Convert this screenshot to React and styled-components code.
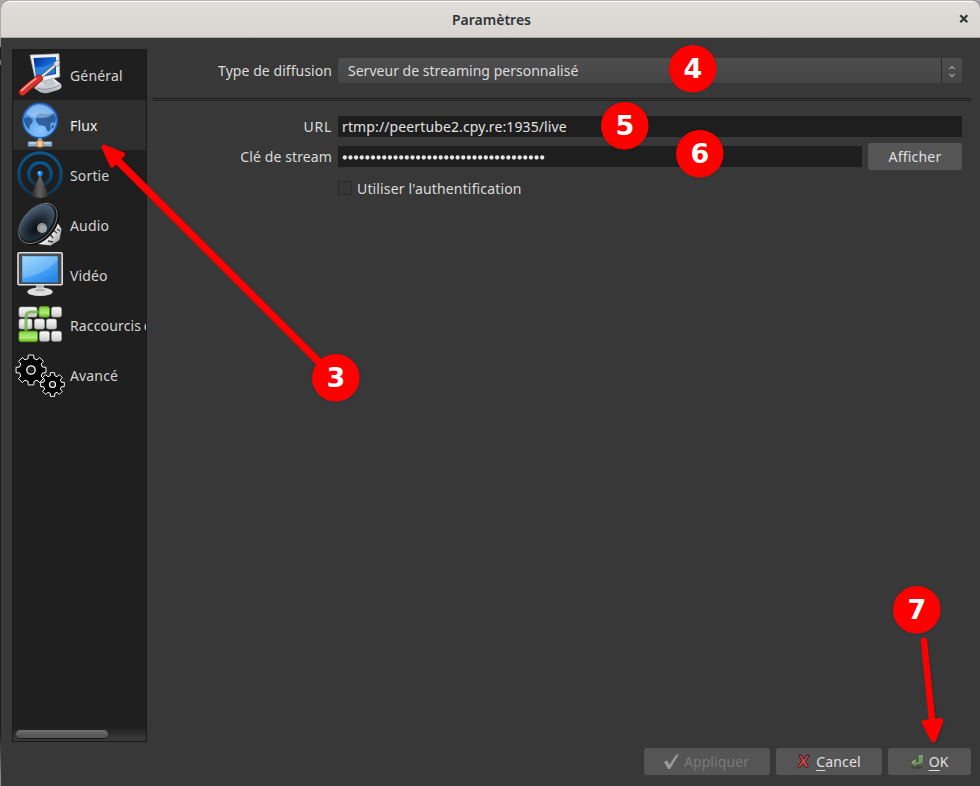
import React from "react";
import styled, { createGlobalStyle } from "styled-components";

const GlobalStyle = createGlobalStyle`
  *, *::before, *::after { box-sizing: border-box; }
  body { margin: 0; background: #1c1c1c; overflow: hidden; }
  button, input { font: inherit; letter-spacing: inherit; color: inherit; border: 0; margin: 0; }
`;

const Desktop = styled.div`
  position: relative;
  width: 980px;
  height: 786px;
  padding: 0 0 0 1px;
  overflow: hidden;
  background: linear-gradient(#aaa 0 38px, #8a8a8a 38px 47px, #1b1b1b 47px 60px, #777 60px 65px, #1b1b1b 65px 732px, #8a8a8a 777px);
  font-family: "Noto Sans", "Open Sans", sans-serif;
  font-size: 14px;
  color: #dcdcdc;
`;

const Window = styled.div`
  height: 786px;
  display: flex;
  flex-direction: column;
  background: #383838;
  border-radius: 8px 8px 0 0;
`;

const TitleBar = styled.header`
  flex: none;
  height: 38px;
  display: grid;
  grid-template-columns: 32px 1fr 32px;
  align-items: center;
  border-top: 1px solid #b5b2b0;
  border-bottom: 1px solid #aaa69d;
  border-radius: 8px 8px 0 0;
  background: linear-gradient(#fff 0 1px, #e0dddb 1px, #d9d5cf);
  color: #2e3436;
`;

const Title = styled.h1`
  grid-column: 2;
  margin: 0;
  padding: 2px 0 0 2px;
  text-align: center;
  font-size: 14px;
  font-weight: 600;
  line-height: 20px;
`;

const CloseButton = styled.button`
  display: grid;
  place-items: center;
  padding: 0;
  background: none;
`;

const Main = styled.div`
  flex: none;
  height: 704px;
  display: flex;
  padding: 11px 9px 0 11px;
`;

const Sidebar = styled.nav`
  width: 135px;
  height: 693px;
  flex: none;
  display: flex;
  flex-direction: column;
  border: 1px solid #1a1a1a;
  background: #1f1f1f;
  overflow: hidden;
`;

const NavItem = styled.a`
  flex: none;
  height: 50px;
  display: flex;
  align-items: center;
  gap: 5px;
  padding-left: 2px;
  background: ${(p) => (p.$active ? "#2e2e2e" : "transparent")};
  color: ${(p) => (p.$active ? "#f2f2f2" : "#d4d4d4")};
  white-space: nowrap;
  letter-spacing: 0.15px;
  word-spacing: -1.3px;
  svg { flex: none; width: 50px; height: 50px; }
`;

const ScrollTrack = styled.div`
  margin-top: auto;
  height: 14px;
  padding: 3px 3px 0;
  background: linear-gradient(#1f1f1f, #373737 80%);
`;

const ScrollThumb = styled.div`
  width: 92px;
  height: 9px;
  border-radius: 5px;
  border-bottom: 1px solid #191919;
  background: linear-gradient(#707070, #5a5a5a 60%, #555);
`;

const Panel = styled.main`
  flex: 1;
  padding: 9px 0 0 6px;
`;

const FormRow = styled.div`
  display: grid;
  grid-template-columns: 179px 624px;
  column-gap: 6px;
  align-items: center;
  height: ${(p) => p.$h}px;
`;

const Label = styled.label`
  text-align: right;
  white-space: nowrap;
  letter-spacing: ${(p) => p.$track || "0"};
`;

const Select = styled.div`
  height: 25px;
  display: flex;
  border-radius: 3px;
  background: linear-gradient(#4e4e4e, #454545);
`;

const SelectValue = styled.span`
  flex: 1;
  padding: 0 10px;
  line-height: 25px;
  letter-spacing: 0.02px;
`;

const SelectArrows = styled.span`
  width: 21px;
  display: grid;
  place-items: center;
  border-left: 1px solid #2b2b2b;
`;

const Divider = styled.div`
  width: 818px;
  height: 3px;
  margin: 15px 0;
  border: 1px solid #1d1d1d;
`;

const TextField = styled.div`
  flex: 1;
  height: 21px;
  padding: 0 4px;
  background: #1e1e1e;
  color: #e2e2e2;
  line-height: 21px;
  letter-spacing: ${(p) => p.$track || "0"};
`;

const Dots = styled.svg`
  display: block;
  width: 210px;
  height: 21px;
  fill: #e4e4e4;
`;

const Group = styled.div`
  display: flex;
  align-items: center;
  gap: ${(p) => p.$gap}px;
`;

const Button = styled.button`
  width: ${(p) => p.$w}px;
  height: 27px;
  flex: none;
  display: flex;
  align-items: center;
  justify-content: center;
  gap: ${(p) => p.$gap || 6}px;
  padding: 0 ${(p) => p.$shift || 0}px 0 0;
  border-radius: 3px;
  background: #555;
  color: ${(p) => (p.$off ? "#7a7a7a" : "#e0e0e0")};
  letter-spacing: ${(p) => p.$track || "0"};
  line-height: 20px;
`;

const Mnemonic = styled.span`
  text-decoration: underline;
  text-underline-offset: 3px;
  text-decoration-thickness: 1px;
`;

const CheckBox = styled.span`
  width: 14px;
  height: 14px;
  border: 1px solid #2a2a2a;
  background: #373737;
`;

const Footer = styled.footer`
  display: flex;
  justify-content: flex-end;
  gap: 6px;
  padding: 6px 9px 0 0;
`;

const Annotations = styled.svg`
  position: absolute;
  inset: 0;
  width: 980px;
  height: 786px;
  pointer-events: none;
  filter: drop-shadow(1px 1px 1px rgba(0, 0, 0, 0.2));
`;

const Badge = styled.span`
  position: absolute;
  left: ${(p) => p.$x}px;
  top: ${(p) => p.$y}px;
  width: 48px;
  height: 48px;
  border-radius: 50%;
  background: radial-gradient(circle at 23.5px 23.5px, #f00 23.6px, transparent 24.4px);
  color: #fff;
  text-align: center;
  font: bold 27px/48px "DejaVu Sans", sans-serif;
  box-shadow: 0 0 2px rgba(0, 0, 0, 0.25);
`;

function gearPath(cx, cy, outer, inner) {
  const pts = [];
  for (let i = 0; i < 8; i += 1) {
    const a = (i * Math.PI) / 4 - Math.PI / 2;
    [[-0.25, inner], [-0.18, outer], [0.18, outer], [0.25, inner]].forEach(([d, r]) => {
      pts.push(`${(cx + r * Math.cos(a + d)).toFixed(2)} ${(cy + r * Math.sin(a + d)).toFixed(2)}`);
    });
  }
  return `M${pts.join("L")}Z`;
}

const GeneralIcon = () => (
  <svg viewBox="0 0 50 50">
    <defs>
      <linearGradient id="gs" x2="1" y2="1"><stop stopColor="#002b94" /><stop offset=".5" stopColor="#1466d2" /><stop offset="1" stopColor="#0a3aa0" /></linearGradient>
      <linearGradient id="gb" x2="0" y2="1"><stop stopColor="#fff" /><stop offset="1" stopColor="#a9abb4" /></linearGradient>
    </defs>
    <path d="M26 31l12-3 8 6q2 4-3 6l-10 3q-5 1-8-1l-6-4z" fill="url(#gb)" />
    <path d="M26 31l11-3 4 6-10 3z" fill="#c3c6cc" />
    <path d="M22 38q9 4 23-3" stroke="#8f939c" fill="none" />
    <path d="M15 5l29-1.2.8 23L21 33z" fill="#eef0f2" stroke="#a5a8ab" strokeWidth=".7" />
    <path d="M18.5 8l22.5-1v17l-20 4z" fill="url(#gs)" />
    <path d="M20 17q12 1 20-6v12l-19 4z" fill="#3f9bea" opacity=".55" />
    <path d="M25 28L40 15.500" stroke="#666" strokeWidth="3" />
    <path d="M25 28L40 15.500" stroke="#e9e9e9" strokeWidth="1.700" />
    <path d="M38.500 15.500l1-3.500 4-2 1.200 2.500-2 4z" fill="#dfe3e6" stroke="#777" strokeWidth=".7" />
    <path d="M7.500 42L15 35.500l9-7" stroke="#8f1111" strokeWidth="7.600" strokeLinecap="round" />
    <path d="M7.500 42L15 35.500l9-7" stroke="#d8302b" strokeWidth="6.200" strokeLinecap="round" />
    <path d="M6.500 40.500L14 34l7-5.500" stroke="#f79a91" strokeWidth="1.800" strokeLinecap="round" />
  </svg>
);

const GlobeIcon = () => (
  <svg viewBox="0 0 50 50">
    <defs>
      <radialGradient id="gl" cx=".5" cy=".8" r=".9"><stop stopColor="#8cc6ff" /><stop offset=".6" stopColor="#4f9bea" /><stop offset="1" stopColor="#2b72cc" /></radialGradient>
    </defs>
    <path d="M23 37h4v6h-4z" fill="#9ab6d4" />
    <path d="M13 41.500h24v5H13z" fill="#8fabc9" stroke="#4b6b90" strokeWidth=".8" />
    <path d="M14 43h22" stroke="#d8e6f3" />
    <rect x="22" y="40.500" width="6" height="6.500" rx="1" fill="#efc79a" stroke="#bd7837" />
    <circle cx="25" cy="20.500" r="17.300" fill="url(#gl)" stroke="#1d60b5" strokeWidth="1.400" />
    <path d="M9 18l5-1 4 3-1 3-2 2-1 5-3-4-2-5zM21 16l4-3 6 1 7-1 3 5-1 5-3-1-2 3 1 4-3 3-3-6-6-1-3-4z" fill="#24528f" opacity=".85" />
    <path d="M36 26l3-1-1 4z" fill="#24528f" />
    <path d="M11 13Q17 4 25 4.500T39 13q-4 5-14 5t-14-5z" fill="#d5eaff" opacity=".45" />
  </svg>
);

const OutputIcon = () => (
  <svg viewBox="0 0 50 50">
    <defs>
      <linearGradient id="or" x2="0" y2="1"><stop stopColor="#075792" /><stop offset=".6" stopColor="#084a79" /><stop offset="1" stopColor="#14324a" /></linearGradient>
      <linearGradient id="oc" x2="1" y2="0"><stop stopColor="#2a2a2a" /><stop offset=".5" stopColor="#606060" /><stop offset="1" stopColor="#2d2d2d" /></linearGradient>
    </defs>
    <circle cx="25" cy="24" r="21.200" fill="none" stroke="url(#or)" strokeWidth="3" />
    <circle cx="25" cy="24" r="11.300" fill="none" stroke="url(#or)" strokeWidth="3.200" />
    <path d="M24 26h2l7.500 20q-8 4-17 0z" fill="url(#oc)" />
    <circle cx="25" cy="23.500" r="2.700" fill="#168aff" />
    <circle cx="24.400" cy="22.700" r="1" fill="#a8dcff" />
  </svg>
);

const AudioIcon = () => (
  <svg viewBox="0 0 50 50">
    <defs>
      <radialGradient id="ac" cx=".62" cy=".62" r=".65"><stop stopColor="#0b0f13" /><stop offset=".45" stopColor="#202c37" /><stop offset="1" stopColor="#4d6377" /></radialGradient>
      <linearGradient id="ab" x2="1" y2="1"><stop stopColor="#777" /><stop offset=".6" stopColor="#f2f2f2" /><stop offset="1" stopColor="#888" /></linearGradient>
    </defs>
    <path d="M41 13l1 9 4.500 7-2 11-9 5.500-16-2z" fill="url(#ab)" />
    <path d="M38 30l4 3m-7 1l3 4m4-9l3 2m-12 10l5 1" stroke="#3b3b3b" strokeWidth="1.400" />
    <ellipse cx="24.500" cy="24.500" rx="15.500" ry="24" transform="rotate(42 24.500 24.500)" fill="#0b0b0b" />
    <ellipse cx="23" cy="23.500" rx="14.800" ry="23.500" transform="rotate(42 23 23.500)" fill="#161a1d" stroke="#8d8d8d" strokeWidth=".8" />
    <ellipse cx="22" cy="22.500" rx="13.300" ry="21.500" transform="rotate(42 22 22.500)" fill="url(#ac)" />
    <circle cx="27" cy="28" r="5" fill="#8f9295" />
    <circle cx="28" cy="29" r="3.500" fill="#a6a6a6" />
  </svg>
);

const VideoIcon = () => (
  <svg viewBox="0 0 50 50">
    <defs>
      <linearGradient id="vs" x2=".7" y2="1"><stop stopColor="#94d2ff" /><stop offset=".5" stopColor="#55adf8" /><stop offset="1" stopColor="#2688e9" /></linearGradient>
    </defs>
    <path d="M21 35h8v5h-8z" fill="#aaa" />
    <ellipse cx="25" cy="41.700" rx="12.700" ry="4.300" fill="#dedede" />
    <ellipse cx="25" cy="40" rx="5" ry="1.600" fill="#b4b4b4" />
    <rect x="3" y="2.700" width="44.200" height="32" rx="1" fill="#4a4a4a" stroke="#dedede" strokeWidth="1.600" />
    <rect x="7" y="6" width="36" height="26.500" fill="url(#vs)" stroke="#24659e" strokeWidth=".6" />
    <path d="M7.300 6.300h35v4Q29 25 7.300 28z" fill="#d8f0ff" opacity=".25" />
  </svg>
);

const WHITE_KEYS = [[4, 7, 18], [36.5, 7, 10], [4, 19, 13], [19.5, 19, 10], [31.5, 19, 10], [24.5, 31.3, 10], [36.5, 31.3, 10]];
const GREEN_KEYS = [[24, 6.7, 10.5], [4, 31.3, 18.5]];

const KeysIcon = () => (
  <svg viewBox="0 0 50 50">
    <defs>
      <linearGradient id="kw" x2="0" y2="1"><stop stopColor="#f8f8f8" /><stop offset=".6" stopColor="#e0e0e0" /><stop offset="1" stopColor="#c5c5c5" /></linearGradient>
      <linearGradient id="kg" x2="0" y2="1"><stop stopColor="#83d33f" /><stop offset=".6" stopColor="#b3ed7a" /><stop offset="1" stopColor="#68b929" /></linearGradient>
    </defs>
    {WHITE_KEYS.map(([x, y, w]) => (
      <rect key={`${x}-${y}`} x={x} y={y} width={w} height="10" rx="2" fill="url(#kw)" stroke="#aaa" strokeWidth=".6" />
    ))}
    <path d="M11 31V17q0-5 5-5h8" fill="none" stroke="#72b546" strokeWidth="3.2" opacity=".85" />
    {GREEN_KEYS.map(([x, y, w]) => (
      <rect key={x} x={x} y={y} width={w} height="10.3" rx="2" fill="url(#kg)" stroke="#59a81e" strokeWidth="1" />
    ))}
  </svg>
);

const GearsIcon = () => (
  <svg viewBox="0 0 50 50" fill="#000" stroke="#fff" strokeLinejoin="round">
    <path d={gearPath(16, 20, 15.2, 11.8)} />
    <circle cx="16" cy="20" r="4.2" fill="#1f1f1f" strokeWidth="1.3" />
    <path d={gearPath(37.5, 34.5, 12, 9.1)} />
    <circle cx="37.5" cy="34.5" r="3" fill="#1f1f1f" strokeWidth="1.2" />
  </svg>
);

const NAV = [
  { label: "Général", Icon: GeneralIcon },
  { label: "Flux", Icon: GlobeIcon, active: true },
  { label: "Sortie", Icon: OutputIcon },
  { label: "Audio", Icon: AudioIcon },
  { label: "Vidéo", Icon: VideoIcon },
  { label: "Raccourcis\u00a0clavier", Icon: KeysIcon },
  { label: "Avancé", Icon: GearsIcon },
];

const BADGES = [
  [3, 312, 354],
  [4, 669, 45],
  [5, 601, 102],
  [6, 676, 130],
  [7, 893, 586],
];

export default function App() {
  return (
    <Desktop>
      <GlobalStyle />
      <Window>
        <TitleBar>
          <Title>Paramètres</Title>
          <CloseButton aria-label="Fermer">
            <svg width="10" height="10" viewBox="0 0 10 10" stroke="#2e3436" strokeWidth="2.2">
              <path d="M1.3 1.3l7 7m0-7l-7 7" />
            </svg>
          </CloseButton>
        </TitleBar>
        <Main>
          <Sidebar>
            {NAV.map(({ label, Icon, active }) => (
              <NavItem key={label} $active={active}>
                <Icon />
                <span>{label}</span>
              </NavItem>
            ))}
            <ScrollTrack>
              <ScrollThumb />
            </ScrollTrack>
          </Sidebar>
          <Panel>
            <FormRow $h={25}>
              <Label $track="0.06px">Type de diffusion</Label>
              <Select>
                <SelectValue>Serveur de streaming personnalisé</SelectValue>
                <SelectArrows>
                  <svg width="8" height="14" viewBox="0 0 8 14" fill="none" stroke="#a5a5a5" strokeWidth="1.2">
                    <path d="M1.500 5l2.500-2.500L6.500 5M1.500 10L4 12.500 6.500 10" />
                  </svg>
                </SelectArrows>
              </Select>
            </FormRow>
            <Divider />
            <FormRow $h={21}>
              <Label $track="0.7px">URL</Label>
              <TextField $track="0.12px">rtmp://peertube2.cpy.re:1935/live</TextField>
            </FormRow>
            <FormRow $h={39}>
              <Label $track="0.12px">Clé de stream</Label>
              <Group $gap={6}>
                <TextField>
                  <Dots aria-label="Clé masquée">
                    {Array.from({ length: 36 }, (_, i) => (
                      <circle key={i} cx={2.8 + i * 5.64} cy="11.5" r="2.15" />
                    ))}
                  </Dots>
                </TextField>
                <Button $w={94} $track="0.2px">Afficher</Button>
              </Group>
            </FormRow>
            <FormRow $h={24}>
              <span />
              <Group $gap={5}>
                <CheckBox />
                <Label $track="0.15px">Utiliser l'authentification</Label>
              </Group>
            </FormRow>
          </Panel>
        </Main>
        <Footer>
          <Button $w={126} $off $gap={5} $shift={1} $track="0.1px">
            <svg width="15" height="16" viewBox="0 0 15 16" fill="#999">
              <path d="M0 8l3-1.500 2.500 4L12 1l3-1L6 15H4z" />
            </svg>
            <span>Appliquer</span>
          </Button>
          <Button $w={106} $track="0.15px">
            <svg width="13" height="15" viewBox="0 0 13 15" fill="#c94b50" stroke="#4a1719" strokeWidth="1">
              <path d="M2 1h2.500l2.300 4.300L10 1l2.500.500L8.300 7.300l3.200 5-2.300 1.500L6 9.500 2.500 14 .7 12.500l4-5.500z" />
            </svg>
            <span><Mnemonic>C</Mnemonic>ancel</span>
          </Button>
          <Button $w={83} $gap={4} $shift={2}>
            <svg width="16" height="15" viewBox="0 0 16 15">
              <ellipse cx="8" cy="13.500" rx="6" ry="1.200" fill="#3d3d3d" />
              <path d="M9 1h5.500v6.500l-2 3-5.500.500v2.500L1 8.500l6-4v3h2z" fill="#76905f" stroke="#42553a" />
              <path d="M10 2h4M3 8.300l4-2.500" stroke="#abc195" />
            </svg>
            <span><Mnemonic>O</Mnemonic>K</span>
          </Button>
        </Footer>
      </Window>
      <Annotations fill="#f00" stroke="#f00" strokeLinecap="round" strokeLinejoin="round">
        <path d="M335 378L114 157" strokeWidth="7.5" />
        <path d="M104 147l18.500 7.500-10.500 10.500z" strokeWidth="5" />
        <path d="M924 641l8.500 84" strokeWidth="6.5" />
        <path d="M924 722.500l17-2-7.500 19.500z" strokeWidth="5" />
      </Annotations>
      {BADGES.map(([n, x, y]) => (
        <Badge key={n} $x={x} $y={y}>{n}</Badge>
      ))}
    </Desktop>
  );
}
